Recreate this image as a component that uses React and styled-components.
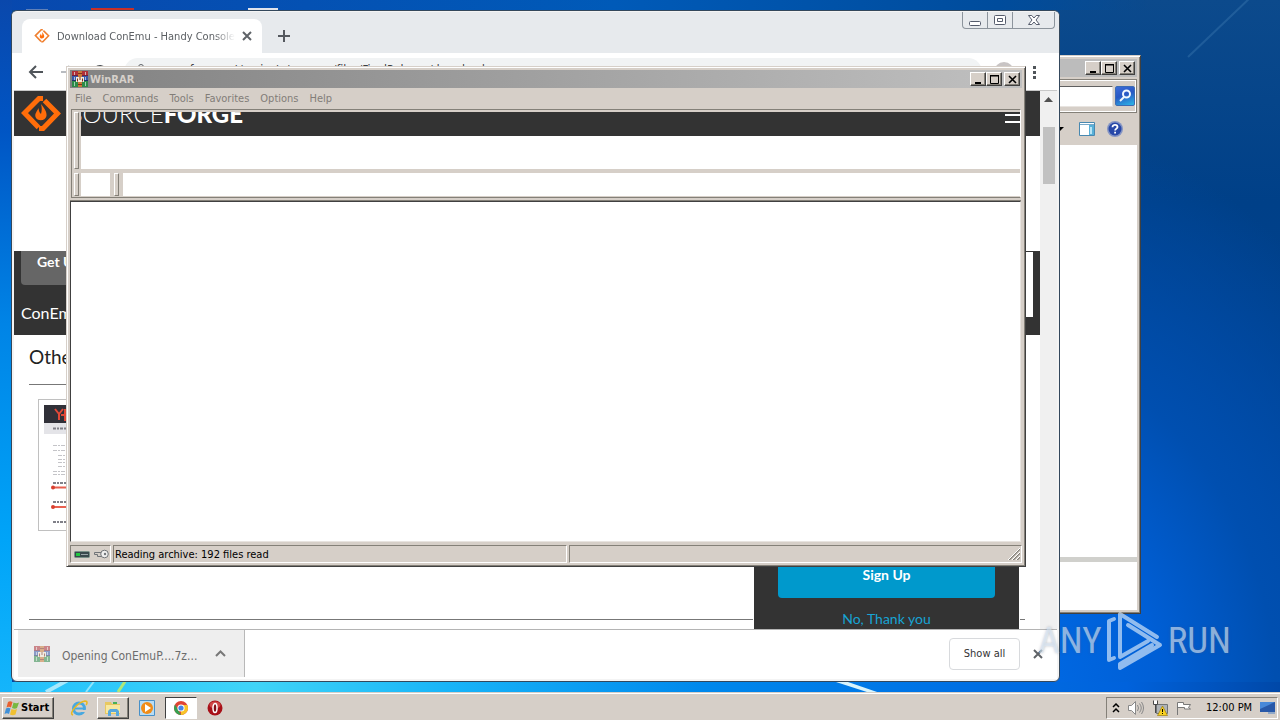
import React from "react";
import styled, { createGlobalStyle, css } from "styled-components";

const ui = `"DejaVu Sans Condensed", "Noto Sans", "DejaVu Sans", sans-serif`;
const face = "#d6cfc8";

const GlobalStyle = createGlobalStyle`
  * { box-sizing: border-box; }
  body { margin: 0; font-family: ${ui}; font-size: 11px; overflow: hidden; }
  button, input { font: inherit; color: inherit; margin: 0; padding: 0; border: 0; background: none; border-radius: 0; }
  h2, p { margin: 0; }
  svg { display: block; flex: none; }
`;

const raised = css`
  border: 1px solid;
  border-color: #fff #404040 #404040 #fff;
  box-shadow: inset -1px -1px 0 #848078;
`;

/* Desktop */
const Desktop = styled.div`
  position: relative;
  display: flex;
  flex-direction: column;
  height: 100vh;
  min-height: 720px;
  overflow: hidden;
  background:
    linear-gradient(180deg, #0a48ac 0%, #0055c4 18%, #0084e6 45%, #00a4f8 75%, #18b8fc 100%) left / 12px 100% no-repeat,
    linear-gradient(90deg, #22c0fc 0%, #40d4f8 20%, #18b4f8 35%, #0088ec 55%, #0070e4 75%, #0062dc 88%, #0048a8 100%) left 682px / 100% 12px no-repeat,
    linear-gradient(90deg, #0848ae 0%, #005ab8 48%, #004c9c 78%, transparent 90%) left top / 100% 10px no-repeat,
    radial-gradient(ellipse 460px 580px at 1000px 700px, #006ce8 0%, #005fd6 35%, #004fb0 60%, rgba(0, 72, 150, 0) 100%),
    linear-gradient(180deg, #0c4a8c 0%, #004088 28%, #004292 60%, #0048a8 100%);
`;
const Wallpaper = styled.svg`
  position: absolute;
  inset: 0;
  width: 1280px;
  height: 720px;
`;
const Workspace = styled.main`
  position: relative;
  flex: 1;
`;

const ClassicButton = styled.button`
  ${raised}
  display: grid;
  place-items: center;
  width: 16px;
  height: 14px;
  background: ${face};
  &:last-child { margin-left: 2px; }
`;
const ClassicFrame = styled.section`
  position: absolute;
  display: flex;
  flex-direction: column;
  padding: 3px;
  background: ${face};
  border: 1px solid;
  border-color: #d6cfc8 #404040 #404040 #d6cfc8;
  box-shadow: inset 1px 1px 0 #fff, inset -1px -1px 0 #848078;
`;
const ClassicTitle = styled.header`
  display: flex;
  align-items: center;
  height: 18px;
  padding: 0 2px;
  color: #d6d0ca;
  font-weight: 700;
  background: linear-gradient(90deg, #828282, #c0c0c0);
  span { flex: 1; padding-left: 2px; }
`;

/* Explorer window */
const ExplorerFrame = styled(ClassicFrame)`
  left: 800px;
  top: 55px;
  width: 341px;
  height: 559px;
`;
const ExplorerTitle = styled(ClassicTitle)`
  background: #bcbcbc;
`;
const ExplorerAddress = styled.div`
  display: flex;
  align-items: center;
  justify-content: flex-end;
  gap: 2px;
  height: 34px;
  margin-top: 2px;
  padding-right: 1px;
  border: 1px solid #848078;
  box-shadow: inset 0 1px 0 #fff, inset -1px -1px 0 #fff;
`;
const ExplorerSearch = styled.input`
  width: 200px;
  height: 21px;
  background: #fff;
  border: 1px solid;
  border-color: #606060 #e8e4e0 #e8e4e0 #606060;
`;
const SearchButton = styled.button`
  display: grid;
  place-items: center;
  width: 20px;
  height: 20px;
  border: 1px solid #3c6cb4;
  border-radius: 2px;
  background: linear-gradient(160deg, #3c6cd8 0%, #2858c4 45%, #2cb8e8 100%);
`;
const ExplorerTools = styled.div`
  display: flex;
  align-items: center;
  justify-content: flex-end;
  gap: 12px;
  height: 32px;
  padding-right: 14px;
`;
const IconButton = styled.button`
  display: grid;
  place-items: center;
`;
const ExplorerFiles = styled.div`
  flex: 1;
  background: #fff;
`;
const ExplorerDetails = styled.div`
  height: 53px;
  background: #fff;
  border-top: 5px solid #d0d0cc;
`;

/* Browser window */
const BrowserFrame = styled.section`
  position: absolute;
  left: 11px;
  top: 10px;
  width: 1049px;
  height: 672px;
  display: flex;
  flex-direction: column;
  padding: 1px 2px 2px;
  background: #f4f4f4;
  border: 1px solid #34485c;
  border-radius: 6px;
  overflow: hidden;
`;
const TabStrip = styled.div`
  display: flex;
  height: 41px;
  margin: 0 -2px;
  padding: 7px 2px 0 10px;
  background: #e7eaed;
`;
const Tab = styled.div`
  display: flex;
  align-items: center;
  gap: 7px;
  width: 240px;
  padding: 0 11px 0 12px;
  color: #5c6064;
  background: #fff;
  border-radius: 8px 8px 0 0;
`;
const TabTitle = styled.span`
  flex: 1;
  white-space: nowrap;
  mask-image: linear-gradient(90deg, #000 88%, transparent);
`;
const NewTab = styled(IconButton)`
  width: 44px;
`;
const WindowControls = styled.div`
  display: flex;
  height: 17px;
  margin: -7px 2px 0 auto;
  border: 1px solid #8c949c;
  border-top: 0;
  border-radius: 0 0 4px 4px;
`;
const WindowControl = styled.button`
  display: grid;
  place-items: center;
  width: ${(p) => p.$w}px;
  & + & { border-left: 1px solid #8c949c; }
`;
const Toolbar = styled.div`
  display: flex;
  align-items: center;
  height: 37px;
  margin: 0 -2px;
  padding: 0 17px 0 14px;
  gap: 12px;
  background: #fff;
`;
const AddressBox = styled.label`
  display: flex;
  align-items: center;
  gap: 8px;
  flex: 1;
  height: 28px;
  padding: 0 12px 4px;
  border-radius: 14px;
  background: #f1f3f4;
  color: #3c4043;
  input { flex: 1; font-size: 12px; outline: 0; }
`;
const Avatar = styled.span`
  width: 20px;
  height: 20px;
  border-radius: 50%;
  background: #c8c4c4;
`;
const Viewport = styled.div`
  display: flex;
  flex: 1;
  min-height: 0;
  border-top: 1px solid #c8c8c8;
`;
const Page = styled.div`
  position: relative;
  flex: 1;
  overflow: hidden;
  background: #fff;
  font-family: Lato, sans-serif;
  color: #222;
`;
const SiteHeader = styled.div`
  height: 45px;
  padding: 3px 7px;
  background: #333;
`;
const AdSpace = styled.div`
  height: 115px;
`;
const ProjectBar = styled.div`
  display: flex;
  justify-content: space-between;
  height: 84px;
  padding: 0 7px;
  background: #333;
  color: #fff;
`;
const ProjectInfo = styled.div`
  display: flex;
  flex-direction: column;
  gap: 17px;
  font-size: 16px;
  line-height: 22px;
`;
const UpdatesButton = styled.button`
  height: 34px;
  padding: 0 16px 12px;
  font-size: 14px;
  font-weight: 700;
  line-height: 22px;
  border-radius: 0 0 4px 4px;
  background: #666;
`;
const ProjectAd = styled.div`
  width: 300px;
  height: 66px;
  border-top: 1px solid #333;
  background: #fff;
`;
const Suggestions = styled.section`
  margin: 0 15px;
  h2 {
    height: 50px;
    padding-top: 10px;
    font-size: 19px;
    font-weight: 400;
    line-height: 24px;
    border-bottom: 1px solid #777;
  }
`;
const Thumb = styled.div`
  width: 100px;
  height: 132px;
  margin: 14px 9px 88px;
  padding: 5px;
  border: 1px solid #c0c0c0;
`;
const Rule = styled.div`
  border-top: 1px solid #777;
`;
const SignupPanel = styled.aside`
  position: absolute;
  right: 20px;
  bottom: 0;
  width: 267px;
  height: 100px;
  padding: 0 24px;
  border: solid #fff;
  border-width: 0 1px;
  background: #333;
  text-align: center;
  font-size: 14px;
  line-height: 20px;
  a { color: #18a4d4; text-decoration: none; }
`;
const SignupButton = styled.button`
  display: block;
  width: 100%;
  height: 69px;
  margin-bottom: 11px;
  color: #fff;
  font-weight: 700;
  line-height: 20px;
  padding-top: 23px;
  border-radius: 4px;
  background: #0099cc;
`;
const ScrollBar = styled.div`
  display: flex;
  flex-direction: column;
  align-items: center;
  width: 17px;
  background: #f0f0f0;
  svg { margin: 6px 0 25px; }
`;
const ScrollThumb = styled.div`
  width: 12px;
  height: 57px;
  background: #c1c1c1;
`;
const DownloadBar = styled.div`
  display: flex;
  align-items: center;
  height: 50px;
  padding: 0 14px 2px 4px;
  background: #fff;
  border-top: 1px solid #b4b4b4;
`;
const DownloadItem = styled.button`
  display: flex;
  align-items: center;
  gap: 12px;
  align-self: stretch;
  width: 227px;
  padding: 0 18px 0 16px;
  color: #6c6c6c;
  font-size: 12px;
  background: #eee;
  border-right: 1px solid #b8b8b8;
  span { flex: 1; padding-top: 4px; text-align: left; white-space: nowrap; }
`;
const ShowAll = styled.button`
  width: 71px;
  height: 32px;
  margin: 0 13px 0 auto;
  color: #333;
  border: 1px solid #d8dadd;
  border-radius: 4px;
`;

/* WinRAR window */
const RarFrame = styled(ClassicFrame)`
  left: 66px;
  top: 66px;
  width: 960px;
  height: 501px;
`;
const Menu = styled.nav`
  display: flex;
  align-items: center;
  gap: 11px;
  height: 21px;
  padding: 0 5px;
  color: #827d78;
`;
const Rebar = styled.div`
  display: flex;
  flex-direction: column;
  height: 89px;
  margin: 0 1px;
  padding: 2px 0 1px;
  border: 1px solid;
  border-color: #848078 #fff #848078 #848078;
`;
const Band = styled.div`
  display: flex;
  height: ${(p) => p.$h}px;
  background: #fff;
  & + & { border-top: 4px solid ${face}; }
`;
const Gripper = styled.div`
  display: flex;
  justify-content: center;
  width: ${(p) => p.$w}px;
  background: ${face};
  &::after {
    content: "";
    width: 3px;
    border: 1px solid;
    border-color: #fff #848078 #848078 #fff;
  }
`;
const BandSlot = styled.div`
  width: 29px;
`;
const BandView = styled.div`
  flex: 1;
`;
const Ghost = styled.div`
  display: flex;
  justify-content: space-between;
  align-items: flex-start;
  height: 24px;
  background: #333;
`;
const GhostLogo = styled.div`
  display: flex;
  justify-content: flex-end;
  align-items: flex-end;
  width: 162px;
  height: 14px;
  overflow: hidden;
  color: #fff;
  font: 300 24px/24px Lato, sans-serif;
  b { font-weight: 900; }
`;
const Hamburger = styled.div`
  width: 15px;
  height: 9px;
  margin-top: 2px;
  border: solid #fff;
  border-width: 2px 0;
`;
const FileList = styled.div`
  flex: 1;
  margin: 3px 1px 3px 0;
  background: #fff;
  border: 1px solid;
  border-color: #404040 #e8e4e0 #e8e4e0 #404040;
  box-shadow: 0 -1px 0 #848078;
`;
const StatusBar = styled.footer`
  display: flex;
  gap: 2px;
  height: 18px;
`;
const StatusCell = styled.div`
  display: flex;
  align-items: center;
  gap: 3px;
  ${(p) => (p.$w ? `width: ${p.$w}px;` : "flex: 1;")}
  padding: 0 ${(p) => p.$pad || 1}px;
  justify-content: ${(p) => (p.$end ? "flex-end" : "flex-start")};
  color: #000;
  border: 1px solid;
  border-color: #848078 #fff #fff #848078;
`;

/* Taskbar */
const Taskbar = styled.footer`
  position: relative;
  display: flex;
  align-items: center;
  height: 28px;
  padding: 3px 2px 1px;
  background: ${face};
  border-top: 1px solid ${face};
  box-shadow: inset 0 1px 0 #fff;
`;
const StartButton = styled.button`
  ${raised}
  display: flex;
  align-items: center;
  gap: 1px;
  width: 52px;
  height: 22px;
  margin-right: 9px;
  padding-left: 1px;
  font-weight: 700;
`;
const TaskButton = styled.button`
  display: grid;
  place-items: center;
  width: 32px;
  height: 22px;
  margin-right: 2px;
  ${(p) => p.$state === "open" && raised}
  ${(p) => p.$state === "active" && css`
    background: #fff;
    border: 1px solid;
    border-color: #404040 #fff #fff #404040;
  `}
`;
const Tray = styled.div`
  display: flex;
  align-items: center;
  gap: 8px;
  height: 22px;
  margin-left: auto;
  padding: 0 1px 0 5px;
  border: 1px solid;
  border-color: #848078 #fff #fff #848078;
`;
const Clock = styled.time`
  width: 46px;
  margin: 0 0 0 5px;
  white-space: nowrap;
`;

/* Watermark over the desktop */
const Watermark = styled.div`
  position: absolute;
  right: 49px;
  bottom: 48px;
  display: flex;
  align-items: center;
  gap: 4px;
  height: 62px;
  color: rgba(222, 236, 250, 0.62);
  font: 400 37px/48px "Liberation Sans Narrow", "Roboto Condensed", Roboto, sans-serif;
  text-shadow: 0 0 3px rgba(80, 90, 110, 0.35);
  pointer-events: none;
`;

const Books = ({ size = 16, faded }) => (
  <svg width={size} height={size} viewBox="0 0 16 16" opacity={faded ? 0.55 : 1} aria-hidden="true">
    <path fill="#b03038" d="M0 0h16v5H0z" />
    <path fill="#3858a8" d="M0 5h16v5H0z" />
    <path fill="#2c8a48" d="M0 10h16v6H0z" />
    <path fill="#70203c" d="M0 4h16v1H0z" />
    <path fill="#20306c" d="M0 9h16v1H0z" />
    <path stroke="#d8b0b0" d="M2.500 1v3M13.500 1v3" />
    <path stroke="#a8b8e0" d="M2.500 6v3M13.500 6v3" />
    <path stroke="#a0d0b0" d="M2.500 11v4M13.500 11v4" />
    <path fill="#c87838" d="M6 0h4v16H6z" />
    <path fill="#f4ead8" d="M4 6h8v5H4z" />
    <path stroke="#803020" fill="none" d="M5.500 10.500V7.500M8 6v3M10.500 10.500V7.500M6 2.500h4M6 13.500h4" />
  </svg>
);
const Flame = ({ size, small }) => (
  <svg width={size} height={size} viewBox="0 0 40 40" aria-hidden="true">
    <g fill="none" stroke={small ? "#f08030" : "#ff6d0a"} strokeWidth={small ? 4 : 5}>
      <path d="M22 4.500h-4L3.500 19l14 14.500" />
      <path d="M23.500 6.500L36.500 19.500 22 34.500h-4" />
    </g>
    <path fill="#ff6d0a" d="M20 10c4 5 6 8 5.500 12-1 5-9 6-11 1-1-4 2-6 3-9 .5 4 1.500 5 2.500 6 1-4 1-6 0-10z" />
  </svg>
);
const Cross = ({ color = "#5f6368", size = 10, w = 2 }) => (
  <svg width={size} height={size} viewBox="0 0 10 10" aria-hidden="true">
    <path d="M1 1l8 8M9 1L1 9" stroke={color} strokeWidth={w} />
  </svg>
);
const glyphs = {
  Minimize: <path fill="#000" d="M1 7h6v2H1z" />,
  Maximize: <path fill="none" stroke="#000" d="M.5 1h8M.5 0v8.500h8V0M0 .5h9" />,
  Close: <path stroke="#000" strokeWidth="1.600" d="M1 1l7 7M8 1L1 8" />,
};
const ClassicControls = () =>
  Object.keys(glyphs).map((name) => (
    <ClassicButton key={name} aria-label={name}>
      <svg width="9" height="9" aria-hidden="true">{glyphs[name]}</svg>
    </ClassicButton>
  ));

function Explorer() {
  return (
    <ExplorerFrame aria-label="File explorer">
      <ExplorerTitle><span /><ClassicControls /></ExplorerTitle>
      <ExplorerAddress>
        <ExplorerSearch aria-label="Search files" />
        <SearchButton aria-label="Search">
          <svg width="14" height="14" viewBox="0 0 14 14" fill="none" stroke="#f0f8ff" strokeWidth="2" aria-hidden="true">
            <circle cx="8.500" cy="5" r="3.500" /><path d="M6 8l-4 4" />
          </svg>
        </SearchButton>
      </ExplorerAddress>
      <ExplorerTools>
        <IconButton aria-label="View options">
          <svg width="8" height="6" aria-hidden="true"><path d="M0 1h5L1 5z" /></svg>
        </IconButton>
        <IconButton aria-label="Preview pane">
          <svg width="16" height="14" aria-hidden="true">
            <path fill="#fff" stroke="#4888b0" d="M.5.5h15v13H.5z" />
            <path fill="#58b0d8" d="M10 3h5v10h-5z" /><path fill="#b8e4f4" d="M11 5h2v7h-2z" />
            <path stroke="#78a8c8" d="M1 2.500h14" />
          </svg>
        </IconButton>
        <IconButton aria-label="Help">
          <svg width="16" height="16" viewBox="0 0 16 16" aria-hidden="true">
            <circle cx="8" cy="8" r="8" fill="#8494c4" /><circle cx="8" cy="8" r="6.500" fill="#2848a8" />
            <path fill="none" stroke="#fff" strokeWidth="1.800" d="M5.500 6.200c0-3.200 5-3 5-.2 0 1.600-2.400 1.700-2.400 3.600" />
            <path fill="#fff" d="M7.200 10.800H9v1.700H7.200z" />
          </svg>
        </IconButton>
      </ExplorerTools>
      <ExplorerFiles />
      <ExplorerDetails />
    </ExplorerFrame>
  );
}

function Browser() {
  return (
    <BrowserFrame aria-label="Web browser">
      <TabStrip>
        <Tab>
          <Flame size={16} small />
          <TabTitle>Download ConEmu - Handy Console</TabTitle>
          <IconButton aria-label="Close tab"><Cross /></IconButton>
        </Tab>
        <NewTab aria-label="New tab">
          <svg width="12" height="12" aria-hidden="true"><path d="M6 0v12M0 6h12" stroke="#55595e" strokeWidth="2" /></svg>
        </NewTab>
        <WindowControls>
          <WindowControl $w={24} aria-label="Minimize">
            <svg width="12" height="12" aria-hidden="true"><rect x=".5" y="7.500" width="11" height="4" rx="1" fill="#fff" stroke="#555c6c" /></svg>
          </WindowControl>
          <WindowControl $w={25} aria-label="Restore">
            <svg width="12" height="10" fill="#fff" stroke="#555c6c" aria-hidden="true"><rect x=".5" y=".5" width="11" height="9" rx="1" /><path d="M3.500 3.500h5v3h-5z" /></svg>
          </WindowControl>
          <WindowControl $w={42} aria-label="Close">
            <svg width="12" height="10" fill="#fff" stroke="#555c6c" aria-hidden="true"><path d="M.5.5h3.300L6 3 8.200.5h3.300L8 5l3.500 4.500H8.200L6 7 3.800 9.500H.5L4 5z" /></svg>
          </WindowControl>
        </WindowControls>
      </TabStrip>
      <Toolbar>
        <IconButton aria-label="Back">
          <svg width="20" height="16" fill="none" stroke="#50555a" strokeWidth="2" aria-hidden="true"><path d="M17 8H4M10 2L4 8l6 6" /></svg>
        </IconButton>
        <IconButton aria-label="Forward">
          <svg width="20" height="16" fill="none" stroke="#b8bbc0" strokeWidth="2" aria-hidden="true"><path d="M3 8h13M10 2l6 6-6 6" /></svg>
        </IconButton>
        <IconButton aria-label="Reload">
          <svg width="22" height="16" fill="none" stroke="#50555a" strokeWidth="2" aria-hidden="true"><path d="M15 5a6 6 0 1 0 .5 5M16 3v3h-4" /></svg>
        </IconButton>
        <AddressBox>
          <svg width="10" height="12" aria-hidden="true"><path fill="#5f6368" d="M1 5h8v7H1z" /><path fill="none" stroke="#5f6368" d="M2.500 5V3a2.500 2.500 0 0 1 5 0v2" /></svg>
          <input aria-label="Address" defaultValue="sourceforge.net/projects/conemu/files/FinalRelease/download" />
        </AddressBox>
        <Avatar />
        <IconButton aria-label="Browser menu">
          <svg width="16" height="14" fill="#50555a" aria-hidden="true"><path d="M7 1h3v3H7zM7 6h3v3H7zM7 11h3v3H7z" /></svg>
        </IconButton>
      </Toolbar>
      <Viewport>
        <Page>
          <SiteHeader><Flame size={40} /></SiteHeader>
          <AdSpace />
          <ProjectBar>
            <ProjectInfo>
              <UpdatesButton>Get Updates</UpdatesButton>
              <p>ConEmu</p>
            </ProjectInfo>
            <ProjectAd />
          </ProjectBar>
          <Suggestions>
            <h2>Other</h2>
            <Thumb>
              <svg width="88" height="120" aria-hidden="true">
                <path fill="#303038" d="M0 0h88v18H0z" /><path fill="#e4e4e8" d="M0 18h88v11H0z" />
                <path fill="none" stroke="#e04838" strokeWidth="2" d="M11 4l4 5v6M19 4l-4 5M17 10h12M21 4v12" />
                <path stroke="#808088" strokeWidth="2" strokeDasharray="3 1 2 1" d="M9 23.500h30M9 78h30M9 97h30M9 117h30" />
                <path stroke="#c4c4c8" strokeDasharray="4 1 2 1" d="M9 40.500h40M9 45.500h40M14 50.500h30M14 54.500h30M14 57.500h30M14 61.500h30M9 66.500h40M9 69.500h40" />
                <path stroke="#e86050" strokeWidth="2" d="M9 82.500h50M9 102h50" />
                <circle cx="9" cy="82.500" r="2" fill="#d84030" /><circle cx="9" cy="102" r="2" fill="#d84030" />
              </svg>
            </Thumb>
            <Rule />
          </Suggestions>
          <SignupPanel>
            <SignupButton>Sign Up</SignupButton>
            <a href="#dismiss">No, Thank you</a>
          </SignupPanel>
        </Page>
        <ScrollBar>
          <svg width="9" height="5" aria-hidden="true"><path fill="#505050" d="M0 5l4.500-5L9 5z" /></svg>
          <ScrollThumb />
        </ScrollBar>
      </Viewport>
      <DownloadBar>
        <DownloadItem>
          <Books faded />
          <span>Opening ConEmuP....7z...</span>
          <svg width="11" height="7" aria-hidden="true"><path d="M1 6l4.500-4.500L10 6" fill="none" stroke="#777" strokeWidth="2" /></svg>
        </DownloadItem>
        <ShowAll>Show all</ShowAll>
        <IconButton aria-label="Close downloads"><Cross /></IconButton>
      </DownloadBar>
    </BrowserFrame>
  );
}

function WinRar() {
  return (
    <RarFrame aria-label="WinRAR">
      <ClassicTitle><Books /><span>WinRAR</span><ClassicControls /></ClassicTitle>
      <Menu>
        {["File", "Commands", "Tools", "Favorites", "Options", "Help"].map((m) => <button key={m}>{m}</button>)}
      </Menu>
      <Rebar>
        <Band $h={57}>
          <Gripper $w={9} />
          <BandView>
            <Ghost>
              <GhostLogo>SOURCE<b>FORGE</b></GhostLogo>
              <Hamburger />
            </Ghost>
          </BandView>
        </Band>
        <Band $h={27}>
          <Gripper $w={9} />
          <BandSlot />
          <Gripper $w={13} />
          <BandView />
        </Band>
      </Rebar>
      <FileList />
      <StatusBar>
        <StatusCell $w={41} $pad={3}>
          <svg width="16" height="7" aria-hidden="true"><rect x=".5" y=".5" width="15" height="6" rx="1" fill="#38484c" stroke="#789088" /><path fill="#20c840" d="M2 2h4v3H2z" /><path fill="#98a4a8" d="M7 3h7v1H7z" /></svg>
          <svg width="16" height="10" aria-hidden="true"><path fill="none" stroke="#707478" d="M8.500 3.500H1.500v2h3v2h4" /><circle cx="11.500" cy="5" r="3.800" fill="#f0f0f0" stroke="#707478" /><circle cx="12" cy="5" r="1.200" fill="#707478" /></svg>
        </StatusCell>
        <StatusCell $w={454}>Reading archive: 192 files read</StatusCell>
        <StatusCell $end>
          <svg width="12" height="12" aria-hidden="true"><path stroke="#848078" strokeWidth="1.500" d="M1 12L12 1M5 12l7-7M9 12l3-3" /><path stroke="#fff" d="M0 12L12 0M4 12l8-8M8 12l4-4" /></svg>
        </StatusCell>
      </StatusBar>
    </RarFrame>
  );
}

const apps = [
  { name: "Internet Explorer", icon: (
    <g fill="none"><circle cx="9" cy="9.500" r="5.500" stroke="#48a8e0" strokeWidth="3" /><path stroke="#48a8e0" strokeWidth="2" d="M4 9.500h10" /><path fill={face} d="M11 11h6v2h-6z" /><path stroke="#e8b820" strokeWidth="1.500" d="M3 16C-2 15 8 3 15 2c3 0 2 3 1 4" /></g>) },
  { name: "Windows Explorer", state: "open", icon: (
    <g><path fill="#e8c860" d="M1 3h6l1 2h8v10H1z" /><path fill="#f8e8a0" d="M2 6h14v8H2z" /><path fill="#48b058" d="M9 3h4v2H9z" /><path fill="#58a8dc" d="M4 17v-5l2-2h7l2 2v5h-3v-4H7v4z" /></g>) },
  { name: "Media Player", icon: (
    <g><path fill="#b8dcf4" stroke="#4890c8" d="M1.500 1.500h15v15h-15z" /><circle cx="9" cy="9" r="6" fill="#f08c18" /><path fill="#fff" d="M7 5l6 4-6 4z" /></g>) },
  { name: "Chrome", state: "active", icon: (
    <g><circle cx="9" cy="9" r="7" fill="#e04434" /><path fill="#34a050" d="M3 5.500L9 16A7 7 0 0 1 3 5.500z" /><path fill="#f8c428" d="M9 9V6h6.300A7 7 0 0 1 9 16z" /><circle cx="9" cy="9" r="3.600" fill="#fff" /><circle cx="9" cy="9" r="2.600" fill="#4484e8" /></g>) },
  { name: "Opera", icon: (
    <g><circle cx="9" cy="9" r="7.500" fill="#a81018" /><ellipse cx="9" cy="6" rx="5.500" ry="3.500" fill="#d04848" /><ellipse cx="9" cy="9" rx="2" ry="4.500" fill="#801018" stroke="#fff" strokeWidth="1.500" /></g>) },
];

export default function App() {
  return (
    <Desktop>
      <GlobalStyle />
      <Wallpaper viewBox="0 0 1280 720" aria-hidden="true">
        <path stroke="#a8e8fc" strokeWidth="4" d="M46 692l22-12" />
        <path stroke="#90e4fc" strokeWidth="2" d="M86 692l9-12" />
        <path stroke="#b0e878" strokeWidth="3" d="M118 692l8-12" />
        <path fill="#d8f4fc" d="M836 682h12l32 11h-10z" />
        <path fill="#c83028" d="M91 8h43v3H91z" /><path fill="#e0e4ec" d="M248 8h30v3h-30z" />
        <path fill="#6080b8" d="M26 9h22v2H26z" />
        <path stroke="#4884b8" strokeOpacity=".35" strokeWidth="2" d="M1188 57L1252-4" />
      </Wallpaper>
      <Workspace>
        <Explorer />
        <Browser />
        <WinRar />
      </Workspace>
      <Taskbar>
        <StartButton>
          <svg width="16" height="16" viewBox="0 0 16 16" aria-hidden="true">
            <path fill="#e86030" d="M4 2q2-1.500 4.500 0L7 7.500Q5 6 2.500 7.500z" /><path fill="#78b840" d="M9.500 2.500q3 1.500 5.500 0L13 8q-2 1.500-5 0z" />
            <path fill="#4090d8" d="M2 8.500q2-1.500 4.500 0L5 14q-2-1.500-4.500 0z" /><path fill="#f0c030" d="M7.500 9q3 1.500 5.500 0l-1.500 5.500q-3 1.500-5.500 0z" />
          </svg>
          Start
        </StartButton>
        {apps.map((a) => (
          <TaskButton key={a.name} aria-label={a.name} $state={a.state}>
            <svg width="18" height="18" viewBox="0 0 18 18" aria-hidden="true">{a.icon}</svg>
          </TaskButton>
        ))}
        <Tray>
          <svg width="8" height="10" fill="none" stroke="#000" strokeWidth="1.500" aria-hidden="true"><path d="M1 4l3-3 3 3M1 9l3-3 3 3" /></svg>
          <svg width="16" height="14" fill="none" stroke="#888" aria-hidden="true"><path fill="#fff" d="M.5 4.500h3l4-4v13l-4-4h-3z" /><path d="M9.500 4q2 3 0 6M11.500 2.500q3.500 4.500 0 9M13.500 1q4 6 0 12" /></svg>
          <svg width="16" height="16" aria-hidden="true"><path fill="#b0b4b8" stroke="#707478" d="M4.500 4.500h11v9h-11z" /><path fill="#fff" stroke="#484848" d="M1.500.500v4h4v-4M3.500 4v9" /><path fill="#f8d020" stroke="#907000" strokeWidth=".6" d="M10.500 6l5 9.500h-10z" /><path stroke="#000" d="M10.500 9v3M10.500 13v1" /></svg>
          <svg width="17" height="14" aria-hidden="true"><path fill="#fff" stroke="#787878" d="M1.500 14V1.500h6v2h7l-2 3 2 1.500h-6V6.500h-7" /></svg>
          <Clock>12:00 PM</Clock>
          <svg width="16" height="13" aria-hidden="true"><path fill="#2858a8" d="M0 1h15v10H0z" /><path fill="#4888d8" d="M0 1h15L0 8z" /><path fill="#90a8c8" d="M8 11h7v2H8z" /></svg>
        </Tray>
      </Taskbar>
      <Watermark>
        <span>ANY</span>
        <svg width="58" height="62" viewBox="0 0 58 62" fill="none" stroke="#dcebfa" strokeOpacity=".66" strokeWidth="4" strokeLinejoin="round" strokeLinecap="round" aria-hidden="true">
          <path d="M8 9L3 11v39l5-2M51 27L14 4v43l28-16M14 58l40-23L22 15M14 58V54l32-19" />
        </svg>
        <span>RUN</span>
      </Watermark>
    </Desktop>
  );
}
